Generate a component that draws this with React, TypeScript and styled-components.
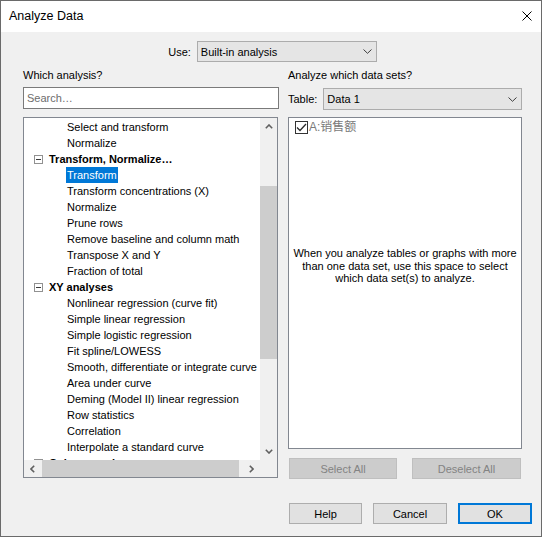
import React from "react";
import styled, { createGlobalStyle } from "styled-components";

const UI_FONT = `"Liberation Sans", Arial, "Noto Sans CJK SC", sans-serif`;

const GlobalStyle = createGlobalStyle`
  html, body { margin: 0; padding: 0; background: #ffffff; }
  body { font-family: ${UI_FONT}; font-size: 11px; color: #000000; }
  *, *::before, *::after { box-sizing: border-box; }
`;

/* ---------- window frame ---------- */

const Window = styled.div`
  width: 542px;
  height: 537px;
  border: 1px solid #6a6a6a;
  background: #f0f0f0;
  display: flex;
  flex-direction: column;
  overflow: hidden;
`;

const TitleBar = styled.div`
  height: 31px;
  flex: none;
  background: #ffffff;
  display: flex;
  align-items: center;
  justify-content: space-between;
  padding: 0 9px 1px 8px;
`;

const Title = styled.span`
  font-size: 12.5px;
  color: #000000;
`;

const CloseButton = styled.span`
  width: 10px;
  height: 10px;
  display: flex;
`;

const Content = styled.div`
  display: flex;
  flex-direction: column;
  padding: 0 19px 0 22px;
`;

/* ---------- combo boxes ---------- */

const ComboRow = styled.div<{ $centered?: boolean; $top: number }>`
  margin-top: ${(p) => p.$top}px;
  display: flex;
  justify-content: ${(p) => (p.$centered ? "center" : "flex-start")};
  align-items: center;
  gap: 6px;
`;

const FieldLabel = styled.span`
  font-size: 11px;
  color: #000000;
  white-space: nowrap;
`;

const Combo = styled.div<{ $width?: number; $height: number }>`
  ${(p) => (p.$width ? `width: ${p.$width}px;` : "flex: 1;")}
  height: ${(p) => p.$height}px;
  background: #e5e5e5;
  border: 1px solid #acacac;
  display: flex;
  align-items: center;
  justify-content: space-between;
  padding: 0 4px 0 3px;
  font-size: 11px;
`;

const Chevron = () => (
  <svg width="9" height="5" viewBox="0 0 9 5">
    <path d="M0.5 0.5 L4.5 4.3 L8.5 0.5" fill="none" stroke="#3c3c3c" strokeWidth="1" />
  </svg>
);

/* ---------- two columns ---------- */

const Columns = styled.div`
  margin-top: 5px;
  display: grid;
  grid-template-columns: 255px 234px;
  column-gap: 10px;
  align-items: start;
`;

const Column = styled.div`
  display: flex;
  flex-direction: column;
`;

const SectionLabel = styled.div`
  height: 16px;
  line-height: 16px;
  font-size: 11px;
`;

const SearchInput = styled.input`
  margin-top: 4px;
  width: 256px;
  height: 22px;
  border: 1px solid #7a7a7a;
  background: #ffffff;
  padding: 0 3px;
  font-family: ${UI_FONT};
  font-size: 11px;
  outline: none;
  &::placeholder { color: #6d6d6d; }
`;

/* ---------- analysis tree ---------- */

const TreeBox = styled.div`
  margin-top: 8px;
  width: 255px;
  height: 361px;
  border: 1px solid #828790;
  background: #ffffff;
  display: grid;
  grid-template-columns: 236px 17px;
  grid-template-rows: 342px 17px;
`;

const TreeViewport = styled.div`
  overflow: hidden;
  white-space: nowrap;
  padding-top: 1px;
`;

const TreeRow = styled.div<{ $indent: number }>`
  height: 16px;
  line-height: 16px;
  display: flex;
  align-items: center;
  padding-left: ${(p) => p.$indent}px;
`;

const Expander = styled.span`
  width: 9px;
  height: 9px;
  border: 1px solid #919191;
  background: #ffffff;
  display: flex;
  align-items: center;
  justify-content: center;
  margin-right: 6px;
  flex: none;
  &::after {
    content: "";
    width: 5px;
    height: 1px;
    background: #3a3a3a;
  }
`;

const GroupText = styled.span`
  font-weight: bold;
  font-size: 11px;
`;

const ItemText = styled.span<{ $selected?: boolean }>`
  font-size: 11px;
  height: 16px;
  padding: 0 1px;
  margin-left: -1px;
  background: ${(p) => (p.$selected ? "#0078d7" : "transparent")};
  color: ${(p) => (p.$selected ? "#ffffff" : "#000000")};
`;

const VScroll = styled.div`
  background: #f0f0f0;
  display: flex;
  flex-direction: column;
`;

const HScroll = styled.div`
  background: #f0f0f0;
  display: flex;
`;

const ScrollCorner = styled.div`
  background: #f0f0f0;
`;

const ArrowCell = styled.div`
  width: 17px;
  height: 17px;
  flex: none;
  display: flex;
  align-items: center;
  justify-content: center;
`;

const Track = styled.div<{ $vertical?: boolean }>`
  flex: 1;
  display: flex;
  flex-direction: ${(p) => (p.$vertical ? "column" : "row")};
`;

const Thumb = styled.div`
  background: #cdcdcd;
  flex: none;
`;

const Arrow = ({ dir }: { dir: "up" | "down" | "left" | "right" }) => {
  const paths: Record<string, string> = {
    up: "M0.8 4.2 L4 1 L7.2 4.2",
    down: "M0.8 0.8 L4 4 L7.2 0.8",
    left: "M4.2 0.8 L1 4 L4.2 7.2",
    right: "M0.8 0.8 L4 4 L0.8 7.2",
  };
  const vertical = dir === "up" || dir === "down";
  return (
    <svg width={vertical ? 8 : 5} height={vertical ? 5 : 8} viewBox={vertical ? "0 0 8 5" : "0 0 5 8"}>
      <path d={paths[dir]} fill="none" stroke="#606060" strokeWidth="1.6" />
    </svg>
  );
};

/* ---------- data set panel ---------- */

const DataSetBox = styled.div`
  margin-top: 7px;
  height: 332px;
  border: 1px solid #828790;
  background: #ffffff;
  display: flex;
  flex-direction: column;
`;

const CheckRow = styled.div`
  padding: 2px 0 0 6px;
  display: flex;
  align-items: center;
  height: 15px;
  box-sizing: content-box;
`;

const CheckBox = styled.span`
  width: 13px;
  height: 13px;
  border: 1px solid #333333;
  background: #ffffff;
  display: flex;
  align-items: center;
  justify-content: center;
  flex: none;
`;

const DataSetName = styled.span`
  margin-left: 1px;
  font-size: 12px;
  line-height: 13px;
  color: #7a7a7a;
  font-family: "Liberation Sans", "Noto Sans CJK SC", sans-serif;
`;

const HintText = styled.p`
  margin: 112px 0 0;
  text-align: center;
  font-size: 11px;
  line-height: 12.5px;
  color: #000000;
`;

const ButtonPair = styled.div`
  margin-top: 9px;
  display: flex;
  justify-content: space-between;
  padding: 0 1px;
`;

const DialogButton = styled.button<{ $width: number; $default?: boolean }>`
  width: ${(p) => p.$width}px;
  height: 21px;
  padding: 0;
  font-family: ${UI_FONT};
  font-size: 11px;
  background: #e1e1e1;
  border: ${(p) => (p.$default ? "2px solid #0078d7" : "1px solid #adadad")};
  color: #000000;
  &:disabled {
    background: #cccccc;
    border-color: #bfbfbf;
    color: #838383;
  }
`;

const Footer = styled.div`
  margin-top: 24px;
  display: flex;
  justify-content: flex-end;
  gap: 11px;
  padding-right: 9px;
`;

/* ---------- data ---------- */

type Node = { kind: "group" | "item"; label: string; selected?: boolean };

const treeNodes: Node[] = [
  { kind: "item", label: "Select and transform" },
  { kind: "item", label: "Normalize" },
  { kind: "group", label: "Transform, Normalize…" },
  { kind: "item", label: "Transform", selected: true },
  { kind: "item", label: "Transform concentrations (X)" },
  { kind: "item", label: "Normalize" },
  { kind: "item", label: "Prune rows" },
  { kind: "item", label: "Remove baseline and column math" },
  { kind: "item", label: "Transpose X and Y" },
  { kind: "item", label: "Fraction of total" },
  { kind: "group", label: "XY analyses" },
  { kind: "item", label: "Nonlinear regression (curve fit)" },
  { kind: "item", label: "Simple linear regression" },
  { kind: "item", label: "Simple logistic regression" },
  { kind: "item", label: "Fit spline/LOWESS" },
  { kind: "item", label: "Smooth, differentiate or integrate curve" },
  { kind: "item", label: "Area under curve" },
  { kind: "item", label: "Deming (Model II) linear regression" },
  { kind: "item", label: "Row statistics" },
  { kind: "item", label: "Correlation" },
  { kind: "item", label: "Interpolate a standard curve" },
  { kind: "group", label: "Column analyses" },
];

// scroll thumb geometry (track offsets and lengths)
const vThumb = { offset: 51, size: 173 };
const hThumb = { offset: 1, size: 197 };

export default function App() {
  return (
    <>
      <GlobalStyle />
      <Window>
        <TitleBar>
          <Title>Analyze Data</Title>
          <CloseButton>
            <svg width="10" height="10" viewBox="0 0 10 10">
              <path d="M0.5 0.5 L9.5 9.5 M9.5 0.5 L0.5 9.5" stroke="#000" strokeWidth="1" />
            </svg>
          </CloseButton>
        </TitleBar>

        <Content>
          <ComboRow $centered $top={9}>
            <FieldLabel>Use:</FieldLabel>
            <Combo $width={180} $height={21}>
              <span>Built-in analysis</span>
              <Chevron />
            </Combo>
          </ComboRow>

          <Columns>
            <Column>
              <SectionLabel>Which analysis?</SectionLabel>
              <SearchInput placeholder="Search…" />
              <TreeBox>
                <TreeViewport>
                  {treeNodes.map((n, i) =>
                    n.kind === "group" ? (
                      <TreeRow key={i} $indent={10}>
                        <Expander />
                        <GroupText>{n.label}</GroupText>
                      </TreeRow>
                    ) : (
                      <TreeRow key={i} $indent={43}>
                        <ItemText $selected={n.selected}>{n.label}</ItemText>
                      </TreeRow>
                    )
                  )}
                </TreeViewport>
                <VScroll>
                  <ArrowCell><Arrow dir="up" /></ArrowCell>
                  <Track $vertical>
                    <Thumb style={{ marginTop: vThumb.offset, height: vThumb.size }} />
                  </Track>
                  <ArrowCell><Arrow dir="down" /></ArrowCell>
                </VScroll>
                <HScroll>
                  <ArrowCell><Arrow dir="left" /></ArrowCell>
                  <Track>
                    <Thumb style={{ marginLeft: hThumb.offset, width: hThumb.size }} />
                  </Track>
                  <ArrowCell><Arrow dir="right" /></ArrowCell>
                </HScroll>
                <ScrollCorner />
              </TreeBox>
            </Column>

            <Column>
              <SectionLabel>Analyze which data sets?</SectionLabel>
              <ComboRow $top={5}>
                <FieldLabel>Table:</FieldLabel>
                <Combo $height={22}>
                  <span>Data 1</span>
                  <Chevron />
                </Combo>
              </ComboRow>
              <DataSetBox>
                <CheckRow>
                  <CheckBox>
                    <svg width="11" height="9" viewBox="0 0 11 9">
                      <path d="M1 4.5 L4 7.5 L10 1" fill="none" stroke="#2b2b2b" strokeWidth="1.3" />
                    </svg>
                  </CheckBox>
                  <DataSetName>A:销售额</DataSetName>
                </CheckRow>
                <HintText>
                  When you analyze tables or graphs with more
                  <br />
                  than one data set, use this space to select
                  <br />
                  which data set(s) to analyze.
                </HintText>
              </DataSetBox>
              <ButtonPair>
                <DialogButton $width={108} disabled>Select All</DialogButton>
                <DialogButton $width={109} disabled>Deselect All</DialogButton>
              </ButtonPair>
            </Column>
          </Columns>
        </Content>

        <Footer>
          <DialogButton $width={73}>Help</DialogButton>
          <DialogButton $width={74}>Cancel</DialogButton>
          <DialogButton $width={74} $default>OK</DialogButton>
        </Footer>
      </Window>
    </>
  );
}
